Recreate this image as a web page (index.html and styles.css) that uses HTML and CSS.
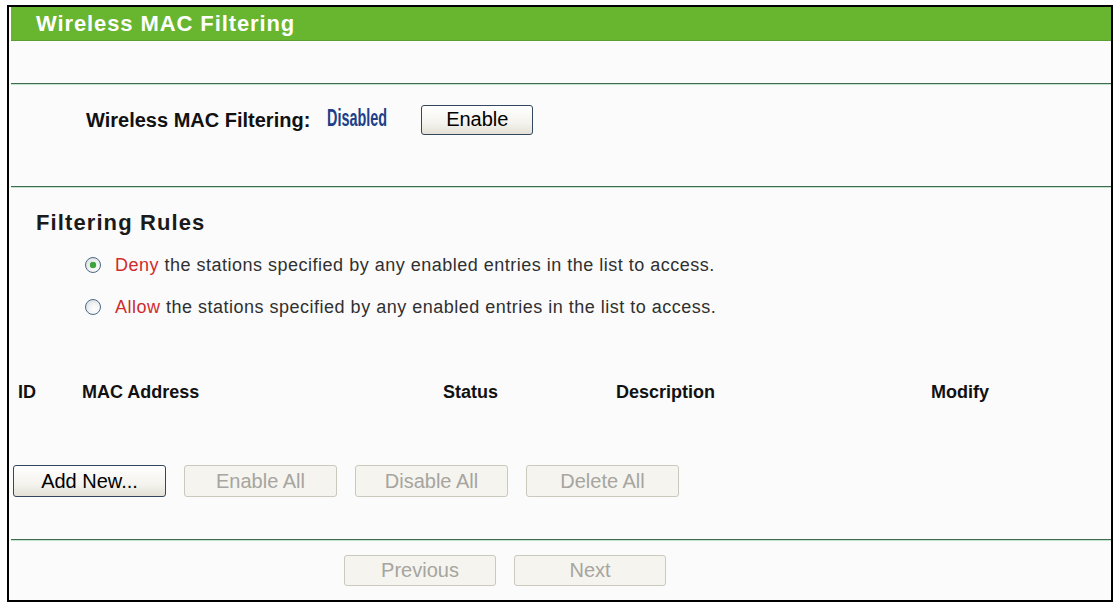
FILE: index.html
```html
<!DOCTYPE html>
<html>
<head>
<meta charset="utf-8">
<title>Wireless MAC Filtering</title>
<link rel="stylesheet" href="styles.css">
</head>
<body>
<div class="frame">
  <div class="title">Wireless MAC Filtering</div>
  <div class="rule rule-first"></div>
  <div class="status-row">
    <span class="status-label">Wireless MAC Filtering:</span>
    <span class="status-value"><span class="status-text">Disabled</span></span>
    <button class="btn btn-enable">Enable</button>
  </div>
  <div class="rule"></div>
  <div class="section-title">Filtering Rules</div>
  <div class="radio-row"><span class="radio radio-checked"></span><span class="red">Deny</span>&nbsp;the stations specified by any enabled entries in the list to access.</div>
  <div class="radio-row"><span class="radio"></span><span class="red">Allow</span>&nbsp;the stations specified by any enabled entries in the list to access.</div>
  <div class="table-head">
    <span>ID</span>
    <span>MAC Address</span>
    <span>Status</span>
    <span>Description</span>
    <span>Modify</span>
  </div>
  <div class="actions">
    <button class="btn btn-wide">Add New...</button>
    <button class="btn btn-wide btn-disabled">Enable All</button>
    <button class="btn btn-wide btn-disabled">Disable All</button>
    <button class="btn btn-wide btn-disabled">Delete All</button>
  </div>
  <div class="rule rule-bottom"></div>
  <div class="pager">
    <button class="btn btn-page btn-disabled">Previous</button>
    <button class="btn btn-page btn-disabled">Next</button>
  </div>
</div>
</body>
</html>
```
FILE: styles.css
```css
html, body {
  margin: 0;
  padding: 0;
  background: #ffffff;
}
body {
  font-family: "Liberation Sans", Arial, sans-serif;
  color: #303030;
}
.frame {
  margin: 5px 0 0 7px;
  width: 1106px;
  height: 597px;
  box-sizing: border-box;
  border: 2px solid #000;
  padding-left: 2px;
  background: #fbfbfb;
  overflow: hidden;
}
.title {
  height: 34px;
  line-height: 34px;
  background: #68b52f;
  border-bottom: 1px solid #5c9e34;
  box-sizing: border-box;
  padding-left: 25px;
  color: #ffffff;
  font-size: 22px;
  font-weight: bold;
  letter-spacing: 0.9px;
}
.rule {
  height: 1px;
  background: #3f6b55;
  box-shadow: 0 1px 0 #c3e3c8;
}
.rule-first {
  margin-top: 42px;
}
.status-row {
  display: flex;
  align-items: center;
  padding: 19px 0 50px 75px;
}
.status-label {
  font-size: 20px;
  font-weight: bold;
  color: #111;
  line-height: 30px;
}
.status-value {
  display: inline-block;
  width: 60px;
  margin-left: 17px;
  white-space: nowrap;
  line-height: 30px;
}
.status-text {
  display: inline-block;
  font-size: 24px;
  font-weight: bold;
  color: #203f88;
  transform: scaleX(0.6);
  transform-origin: left center;
}
.btn {
  font-family: "Liberation Sans", Arial, sans-serif;
  font-size: 20px;
  color: #000;
  border: 1px solid #33475e;
  border-radius: 3px;
  background: linear-gradient(#ffffff, #f4f3ee 60%, #e3e1d6);
  padding: 0;
  margin: 0;
  box-sizing: border-box;
}
.btn-enable {
  width: 112px;
  height: 30px;
  margin-left: 34px;
}
.btn-disabled {
  color: #a6a59f;
  border-color: #cbc9bd;
  background: #f5f4ef;
}
.section-title {
  margin-top: 23px;
  padding-left: 25px;
  font-size: 22px;
  line-height: 26px;
  font-weight: bold;
  letter-spacing: 1.1px;
  color: #1a1a1a;
}
.radio-row {
  display: flex;
  align-items: center;
  height: 42px;
  padding-left: 74px;
  font-size: 18px;
  letter-spacing: 0.5px;
  white-space: pre;
}
.section-title + .radio-row {
  margin-top: 8px;
}
.radio {
  width: 16px;
  height: 16px;
  box-sizing: border-box;
  border: 1px solid #4a6a8a;
  border-radius: 50%;
  background: radial-gradient(circle at 60% 65%, #ffffff 0, #f2f2f2 45%, #cfd3d6 100%);
  margin-right: 14px;
  position: relative;
  flex: none;
}
.radio-checked::after {
  content: "";
  position: absolute;
  left: 4px;
  top: 4px;
  width: 6px;
  height: 6px;
  border-radius: 50%;
  background: #3aa53a;
  box-shadow: 0 0 1px #2f8a2f;
}
.red {
  color: #cf2b2b;
}
.table-head {
  display: grid;
  grid-template-columns: 64px 361px 173px 315px 1fr;
  margin-top: 52px;
  padding-left: 7px;
  height: 24px;
  line-height: 24px;
  font-size: 18px;
  font-weight: bold;
  color: #111;
}
.actions {
  display: flex;
  gap: 18px;
  margin-top: 61px;
  padding-left: 2px;
}
.btn-wide {
  width: 153px;
  height: 32px;
}
.rule-bottom {
  margin-top: 42px;
}
.pager {
  display: flex;
  gap: 18px;
  margin-top: 15px;
  padding-left: 333px;
}
.btn-page {
  width: 152px;
  height: 31px;
}
```
